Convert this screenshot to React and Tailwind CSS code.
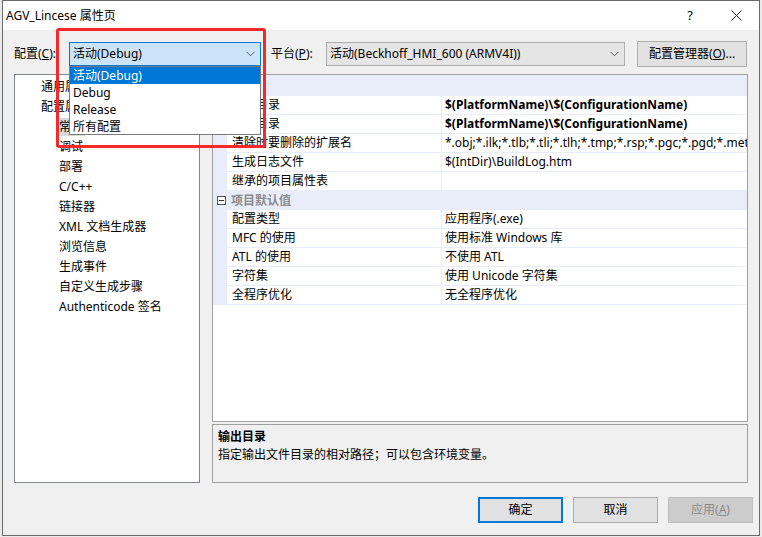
import React from "react";

const treeItems = [
  { label: "通用属性", level: 0 },
  { label: "配置属性", level: 0 },
  { label: "常规", level: 1, selected: true },
  { label: "调试", level: 1 },
  { label: "部署", level: 1 },
  { label: "C/C++", level: 1 },
  { label: "链接器", level: 1 },
  { label: "XML 文档生成器", level: 1 },
  { label: "浏览信息", level: 1 },
  { label: "生成事件", level: 1 },
  { label: "自定义生成步骤", level: 1 },
  { label: "Authenticode 签名", level: 1 },
];

const generalRows = [
  { name: "输出目录", value: "$(PlatformName)\\$(ConfigurationName)", bold: true },
  { name: "中间目录", value: "$(PlatformName)\\$(ConfigurationName)", bold: true },
  {
    name: "清除时要删除的扩展名",
    value: "*.obj;*.ilk;*.tlb;*.tli;*.tlh;*.tmp;*.rsp;*.pgc;*.pgd;*.meta;$(TargetPath)",
  },
  { name: "生成日志文件", value: "$(IntDir)\\BuildLog.htm" },
  { name: "继承的项目属性表", value: "" },
];

const defaultRows = [
  { name: "配置类型", value: "应用程序(.exe)" },
  { name: "MFC 的使用", value: "使用标准 Windows 库" },
  { name: "ATL 的使用", value: "不使用 ATL" },
  { name: "字符集", value: "使用 Unicode 字符集" },
  { name: "全程序优化", value: "无全程序优化" },
];

const Chevron = () => (
  <svg width="9" height="6" viewBox="0 0 9 6" className="shrink-0">
    <polyline points="0.5,0.8 4.5,4.8 8.5,0.8" fill="none" stroke="#5f5f5f" strokeWidth="1" />
  </svg>
);

const CategoryRow = ({ label, tall }) => (
  <div className={`flex items-center bg-[#e9ecf9] ${tall ? "h-[21px]" : "h-[19px]"}`}>
    <div className="w-[14px] flex items-center justify-center pl-[2px]">
      <div className="relative w-[9px] h-[9px] border border-[#555] bg-white">
        <div className="absolute left-[1px] right-[1px] top-[3px] h-[1px] bg-[#333]" />
      </div>
    </div>
    <span className="pl-[4px] font-bold text-[#8a8a8a]">{label}</span>
  </div>
);

const PropRow = ({ name, value, bold }) => (
  <div className="flex h-[19px] border-b border-[#e9ecf9]">
    <div className="w-[14px] shrink-0 bg-[#e9ecf9]" />
    <div className="w-[215px] shrink-0 pl-[5px] leading-[18px] border-r border-[#e9ecf9] whitespace-nowrap overflow-hidden">
      {name}
    </div>
    <div className={`flex-1 pl-[3px] leading-[18px] whitespace-nowrap overflow-hidden ${bold ? "font-bold" : ""}`}>
      {value}
    </div>
  </div>
);

export default function App() {
  return (
    <div className="w-[762px] h-[537px] bg-[#eaeaea] overflow-hidden text-[12px] text-black [font-family:'Noto_Sans','Noto_Sans_CJK_SC',sans-serif]">
      <div className="ml-[2px] w-[758px] h-[536px] border border-[#6a6a6a] bg-[#f0f0f0] flex flex-col">
        {/* Title bar */}
        <div className="h-[29px] bg-white flex items-center shrink-0">
          <span className="pl-[3px] flex-1">AGV_Lincese 属性页</span>
          <div className="w-[46px] h-full flex items-center justify-center text-[13px]">?</div>
          <div className="w-[46px] h-full flex items-center justify-center">
            <svg width="11" height="11" viewBox="0 0 11 11">
              <path d="M0.5 0.5 L10.5 10.5 M10.5 0.5 L0.5 10.5" stroke="#222" strokeWidth="1" />
            </svg>
          </div>
        </div>

        <div className="flex-1 flex flex-col px-[11px] pt-[12px]">
          {/* Configuration row */}
          <div className="flex items-center h-[24px]">
            <span className="w-[55px]">
              配置(<span className="underline">C</span>):
            </span>
            <div className="relative w-[192px] h-[24px]">
              <div className="h-full border border-[#0078d7] bg-[#cce4f7] flex items-center pl-[3px] pr-[5px]">
                <span className="flex-1">活动(Debug)</span>
                <Chevron />
              </div>
              <div className="absolute left-0 top-[24px] w-[192px] border border-[#7a7a7a] bg-white z-10">
                <div className="h-[17px] leading-[17px] pl-[3px] bg-[#0078d7] text-white">活动(Debug)</div>
                <div className="h-[17px] leading-[17px] pl-[3px]">Debug</div>
                <div className="h-[17px] leading-[17px] pl-[3px]">Release</div>
                <div className="h-[16px] leading-[17px] pl-[3px]">所有配置</div>
              </div>
              <div className="absolute left-[-13px] top-[-14px] w-[210px] h-[120px] border-[3px] border-[#f5282a] rounded-[3px] z-20 pointer-events-none" />
            </div>
            <span className="ml-[10px] w-[55px]">
              平台(<span className="underline">P</span>):
            </span>
            <div className="w-[299px] h-[24px] border border-[#adadad] bg-[#e5e5e5] flex items-center pl-[3px] pr-[5px]">
              <span className="flex-1">活动(Beckhoff_HMI_600 (ARMV4I))</span>
              <Chevron />
            </div>
            <button className="ml-[12px] w-[110px] h-[26px] border border-[#adadad] bg-[#e1e1e1] flex items-center justify-center">
              配置管理器(<span className="underline">O</span>)...
            </button>
          </div>

          {/* Panels */}
          <div className="mt-[8px] flex gap-[12px] h-[409px]">
            <div className="w-[186px] h-full border border-[#828790] bg-white pt-[2px]">
              {treeItems.map((item) => (
                <div
                  key={item.label}
                  className={`h-[20px] flex items-center ${item.level === 0 ? "pl-[24px]" : "pl-[42px]"}`}
                >
                  <span className={`px-[2px] leading-[18px] ${item.selected ? "bg-[#d9d9d9]" : ""}`}>
                    {item.label}
                  </span>
                </div>
              ))}
            </div>

            <div className="w-[536px] h-full flex flex-col">
              <div className="h-[348px] border border-[#a0a0a0] bg-white overflow-hidden">
                <CategoryRow label="常规" tall />
                {generalRows.map((r) => (
                  <PropRow key={r.name} {...r} />
                ))}
                <CategoryRow label="项目默认值" />
                {defaultRows.map((r) => (
                  <PropRow key={r.name} {...r} />
                ))}
              </div>
              <div className="mt-[2px] flex-1 border border-[#a0a0a0] bg-[#f0f0f0] px-[5px] pt-[3px]">
                <div className="font-bold leading-[18px]">输出目录</div>
                <div className="leading-[18px]">指定输出文件目录的相对路径；可以包含环境变量。</div>
              </div>
            </div>
          </div>

          {/* Buttons */}
          <div className="mt-[14px] mr-[-5px] flex justify-end gap-[10px]">
            <button className="w-[85px] h-[26px] border-2 border-[#0078d7] bg-[#e1e1e1]">确定</button>
            <button className="w-[85px] h-[26px] border border-[#adadad] bg-[#e1e1e1]">取消</button>
            <button className="w-[85px] h-[26px] border border-[#bfbfbf] bg-[#cccccc] text-[#8a8a8a]">
              应用(<span className="underline">A</span>)
            </button>
          </div>
        </div>
      </div>
    </div>
  );
}
